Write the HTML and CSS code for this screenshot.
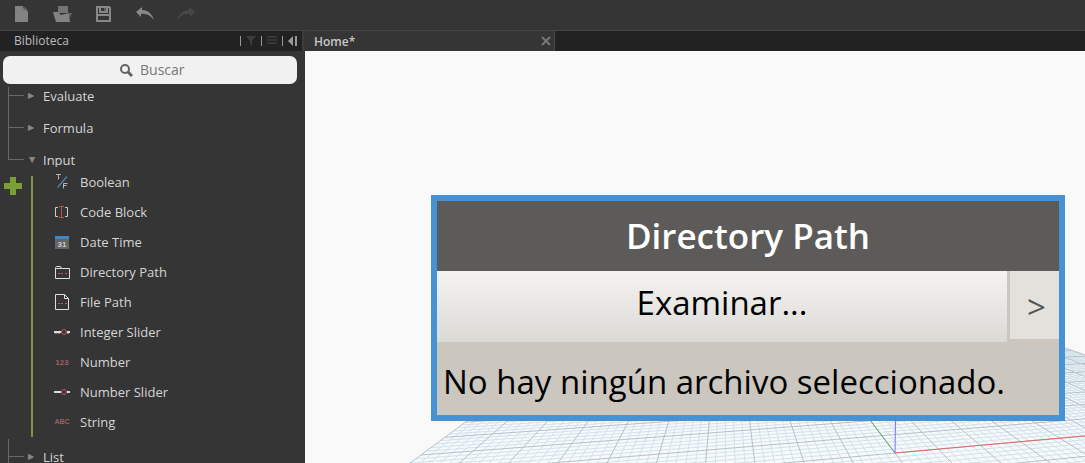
FILE: index.html
```html
<!DOCTYPE html>
<html lang="es">
<head>
<meta charset="utf-8">
<title>Home</title>
<link rel="stylesheet" href="styles.css">
</head>
<body>
<div class="app">
  <header class="toolbar">
    <button class="tool" aria-label="Nuevo"><svg width="14" height="16" viewBox="0 0 14 16"><path d="M0 0h8v1l3 1 2 4v10H0z" fill="#828282"/><path d="M6 1c4 0 6 2 7 5-1-2-3-2-4-2 0-1-1-3-3-3z" fill="#5a5a5a"/></svg></button>
    <button class="tool" aria-label="Abrir"><svg width="20" height="16" viewBox="0 0 20 16"><path d="M5 0h10v7H5z" fill="#747474"/><path d="M0 6h5l3 3 8-2 1 9H3z" fill="#828282"/><path d="M16 7h3l-2 5z" fill="#666"/></svg></button>
    <button class="tool" aria-label="Guardar"><svg width="16" height="16" viewBox="0 0 16 16" fill="none" stroke="#888"><path d="M1 1h12l1 1v13H1z" stroke-width="2"/><path d="M4 1v5h7V1M2 9h12" stroke-width="2"/><path d="M9 2v3"/></svg></button>
    <button class="tool" aria-label="Deshacer"><svg width="18" height="14" viewBox="0 0 18 14"><path d="M6 0L0 5l5 5V7c5-1 9 1 13 6C16 7 12 3 6 3z" fill="#888"/></svg></button>
    <button class="tool" aria-label="Rehacer"><svg width="18" height="14" viewBox="0 0 18 14"><path d="M12 0l6 5-5 5V7C8 6 4 8 0 13 2 7 6 3 12 3z" fill="#484848"/></svg></button>
  </header>
  <aside class="sidebar">
    <div class="panel-head">
      <h2 class="panel-title">Biblioteca</h2>
      <div class="panel-tools">
        <i class="sep"></i>
        <button aria-label="Filtrar"><svg width="10" height="10" viewBox="0 0 10 10"><path d="M0 0h10L6 5v5L4 8V5z" fill="#3c3c3c"/></svg></button>
        <i class="sep"></i>
        <button aria-label="Lista"><svg width="10" height="10" viewBox="0 0 10 10"><path d="M0 1h10M0 4h10M0 7h10" stroke="#363636" stroke-width="2"/></svg></button>
        <i class="sep"></i>
        <button aria-label="Contraer"><svg width="10" height="10" viewBox="0 0 10 10"><path d="M5 0v10L0 5z" fill="#999"/><path d="M8 0v10" stroke="#999" stroke-width="2"/></svg></button>
      </div>
    </div>
    <label class="search">
      <svg width="13" height="13" viewBox="0 0 13 13" fill="none" stroke="#636363"><circle cx="5" cy="5" r="4" stroke-width="2"/><path d="M8 8l4 4" stroke-width="3"/></svg>
      <input type="text" placeholder="Buscar" aria-label="Buscar">
    </label>
    <nav class="tree">
      <button class="category first"><span class="arrow">▶</span>Evaluate</button>
      <button class="category"><span class="arrow">▶</span>Formula</button>
      <button class="category open"><span class="arrow down">▶</span>Input</button>
      <div class="group">
        <div class="rail"><svg class="plus" width="20" height="20" viewBox="0 0 20 20"><path d="M10 1v18M1 10h18" stroke="#7b9f35" stroke-width="6"/></svg></div>
        <ul class="items">
          <li><button class="item"><svg width="16" height="16" viewBox="0 0 16 16" fill="none"><path d="M3.500 13.500L13 2.500" stroke="#5c82a8" stroke-width="1.200"/><path d="M2 .500h5M4.500 .500v5M9.500 14.500v-5h4M9.500 11.500h3" stroke="#b5b5b5"/></svg>Boolean</button></li>
          <li><button class="item"><svg width="16" height="16" viewBox="0 0 16 16" fill="none"><path d="M4 3.500H1.500v9H4M11 3.500h2.500v9H11" stroke="#ccc"/><path d="M5 2.500h5M5 13.500h5M7.500 3v10" stroke="#bb4c50"/></svg>Code Block</button></li>
          <li><button class="item"><svg width="16" height="16" viewBox="0 0 16 16"><path d="M1 2h14v13H1z" fill="#646464"/><path d="M1 2h14v3H1z" fill="#4187c5"/><text x="8" y="13" text-anchor="middle" class="day">31</text></svg>Date Time</button></li>
          <li><button class="item"><svg width="16" height="16" viewBox="0 0 16 16" fill="none"><path d="M1.500 14.500v-11l1-1h4l1 2h8v10zM1.500 4.500h6" stroke="#ddd"/><path d="M4 9.500h2M7 9.500h2M11 9.500h2" stroke="#b85d62"/></svg>Directory Path</button></li>
          <li><button class="item"><svg width="16" height="18" viewBox="0 0 16 18" fill="none"><path d="M1.500 1.500h9l4 4v11h-13zM10.500 1.500v4h4" stroke="#ddd"/><path d="M4 10.500h2M7 10.500h2M11 10.500h2" stroke="#b85d62"/></svg>File Path</button></li>
          <li><button class="item"><svg width="16" height="16" viewBox="0 0 16 16" fill="none"><path d="M0 8h8M13 8h3" stroke="#ddd" stroke-width="2"/><path d="M2 9v1M5 9v1M14 9v1" stroke="#ccc"/><circle cx="10" cy="8" r="2.500" fill="#4a3032" stroke="#a65b61"/></svg>Integer Slider</button></li>
          <li><button class="item"><svg width="16" height="16" viewBox="0 0 16 16"><text x="8" y="11" text-anchor="middle" class="glyph digits">123</text></svg>Number</button></li>
          <li><button class="item"><svg width="16" height="16" viewBox="0 0 16 16" fill="none"><path d="M0 8h8M13 8h3" stroke="#ddd" stroke-width="2"/><circle cx="10" cy="8" r="2.500" fill="#4a3032" stroke="#a65b61"/></svg>Number Slider</button></li>
          <li><button class="item"><svg width="16" height="16" viewBox="0 0 16 16"><text x="8" y="10" text-anchor="middle" class="glyph">ABC</text></svg>String</button></li>
        </ul>
      </div>
      <button class="category last"><span class="arrow">▶</span>List</button>
    </nav>
  </aside>
  <main class="workspace">
    <div class="tabs">
      <div class="tab"><span>Home*</span><button class="close" aria-label="Cerrar"><svg width="10" height="10" viewBox="0 0 10 10"><path d="M1 1l8 8M9 1l-8 8" stroke="#777" stroke-width="2"/></svg></button></div>
    </div>
    <div class="canvas">
      <svg class="grid" aria-hidden="true">
        <path id="plane" fill="#f7fafc"/>
        <path id="minor" stroke="#d2e2ea"/>
        <path id="major" stroke="#b5c0c7"/>
        <path id="axis-y" stroke="#58a866"/>
        <path id="axis-z" stroke="#7373e6"/>
        <path id="axis-x" stroke="#e66565"/>
      </svg>
      <section class="node">
        <h1 class="node-title">Directory Path</h1>
        <div class="node-row">
          <button class="browse">Examinar...</button>
          <button class="port">&gt;</button>
        </div>
        <p class="node-value">No hay ningún archivo seleccionado.</p>
      </section>
    </div>
  </main>
</div>
<script src="grid.js"></script>
</body>
</html>
```
FILE: grid.js
```js
// Perspective ground plane: u and v run over the 20 x 20 cells, origin at (10, 0).
function project(u, v) {
  const depth = 1 / (0.004484 + 0.00008 * (u - 10) + 0.00038 * v);
  return [421 + depth * (-1.356 + 0.2114 * u), 179 + depth];
}
function line(u1, v1, u2, v2) {
  return 'M' + project(u1, v1).map(n => n.toFixed(1)) + 'L' + project(u2, v2).map(n => n.toFixed(1));
}
function draw(id, d) {
  document.getElementById(id).setAttribute('d', d);
}
const near = -5, far = 10;
let minor = '', major = '';
for (let i = 0; i <= 100; i++) {
  const d = line(i / 5, near, i / 5, far);
  if (i % 5) minor += d; else major += d;
}
for (let i = near * 5; i <= far * 5; i++) {
  const d = line(0, i / 5, 20, i / 5);
  if (i % 5) minor += d; else major += d;
}
draw('minor', minor);
draw('major', major);
draw('plane', 'M' + [[0, near], [20, near], [20, far], [0, far]].map(p => project(...p)).join('L') + 'Z');
draw('axis-x', line(10, 0, 20, 0));
draw('axis-y', line(10, 0, 10, 10));
const [ox, oy] = project(10, 0);
draw('axis-z', `M${ox} ${oy}L${ox + 1} ${oy - 80}`);
```
FILE: styles.css
```css
* { box-sizing: border-box; }
body { margin: 0; font-family: "Open Sans", sans-serif; font-size: 13px; color: #d4d4d4; background: #353535; }
button { border: 0; padding: 0; margin: 0; background: none; color: inherit; font: inherit; }
svg { display: block; flex: none; }
.app { display: grid; grid-template: 30px 1fr / 305px 1fr; height: 100vh; overflow: hidden; }
.toolbar { grid-column: 1 / 3; display: flex; align-items: center; gap: 24px; padding: 0 13px 2px; }
.tool { display: flex; justify-content: center; width: 17px; }
.sidebar { overflow: hidden; min-height: 0; display: flex; flex-direction: column; }
.panel-head { flex: none; display: flex; align-items: center; justify-content: space-between; height: 21px; margin-right: 1px; padding: 0 4px 0 14px; background: #222; border-top: 1px solid #444; border-right: 2px solid #3d3d3d; }
.panel-title { margin: 0; font-size: 12px; font-weight: 400; line-height: 20px; color: #bbb; }
.panel-tools { display: flex; align-items: center; gap: 5px; }
.sep { width: 1px; height: 10px; background: #999; }
.search { flex: none; display: flex; align-items: center; justify-content: center; gap: 7px; height: 28px; margin: 5px 8px 0 3px; padding-left: 10px; background: #f1f1f1; border-radius: 7px; }
.search input { width: 50px; border: 0; padding: 0; outline: 0; background: none; font: 14px/20px "Open Sans", sans-serif; color: #6b6b6b; }
.search input::placeholder { color: #777; opacity: 1; }
.tree { flex: none; display: flex; flex-direction: column; padding-top: 4px; }
.category { position: relative; display: flex; align-items: flex-start; height: 16px; margin-bottom: 16px; padding-left: 28px; line-height: 16px; text-align: left; }
.category::before { content: ""; position: absolute; left: 8px; bottom: 8px; width: 15px; height: 32px; border: solid #686868; border-width: 0 0 1px 1px; }
.category.first::before { height: 8px; }
.category.open { height: 15px; margin-bottom: 0; clip-path: inset(-30px 0 0 0); }
.category.open::before { bottom: 7px; }
.category.last { margin-top: 12px; }
.category.last::before { height: 17px; }
.category.last::after { content: ""; position: absolute; left: 8px; top: 8px; height: 20px; border-left: 1px solid #686868; }
.arrow { width: 15px; font: 8px/16px "DejaVu Sans", sans-serif; color: #888; }
.arrow.down { width: 8px; margin-right: 7px; text-align: center; transform: rotate(90deg); }
.group { display: grid; grid-template-columns: 33px 1fr; }
.rail { margin-top: 9px; border-right: 2px solid #7b9641; padding-left: 3px; }
.items { margin: 0; padding: 0; list-style: none; }
.item { display: flex; align-items: center; gap: 10px; width: 100%; height: 30px; padding-left: 21px; text-align: left; }
.day { font: 700 8px "Liberation Sans", sans-serif; fill: #ccc; }
.glyph { font: 700 7px "Liberation Sans", sans-serif; fill: #9c6065; }
.digits { font-size: 8px; }
.workspace { display: flex; flex-direction: column; min-width: 0; min-height: 0; }
.tabs { flex: none; height: 21px; background: #222; border-top: 1px solid #444; }
.tab { display: flex; align-items: center; justify-content: space-between; width: 250px; height: 100%; padding: 0 3px 0 9px; background: #353535; border-right: 1px solid #484848; font-size: 12px; font-weight: 600; color: #c8c8c8; }
.canvas { position: relative; flex: 1; overflow: hidden; background: #f9f9f9; }
.grid { position: absolute; inset: 0; width: 100%; height: 100%; fill: none; }
.node { position: absolute; left: 126px; top: 144px; width: 634px; border: 6px solid #4592d5; background: #cbc7bf; color: #000; }
.node-title { margin: 0; height: 70px; background: #5d5b59; color: #fff; font-size: 35px; font-weight: 600; line-height: 70px; text-align: center; }
.node-row { display: flex; align-items: flex-start; gap: 3px; }
.browse { flex: 1; height: 71px; padding-bottom: 8px; background: linear-gradient(#f4f3f2, #dcdad5); font-size: 33px; line-height: 63px; }
.port { width: 49px; height: 68px; padding: 2px 0 0 4px; background: #e3e1dc; font-size: 33px; color: #555; }
.node-value { margin: 0; padding: 6px 6px 0; height: 73px; font-size: 33px; line-height: 68px; white-space: nowrap; }
```
